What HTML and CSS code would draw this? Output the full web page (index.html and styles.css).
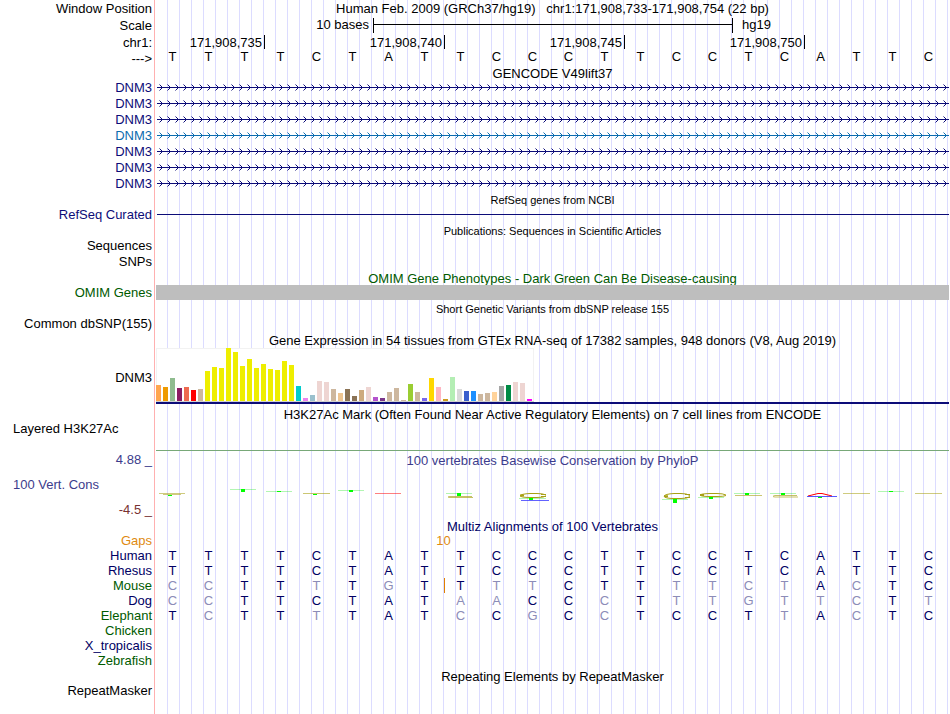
FILE: index.html
```
<!DOCTYPE html>
<html lang="en">

<head>
    <meta charset="utf-8">
    <title>chr1:171,908,733-171,908,754 hg19</title>
    <link rel="stylesheet" href="styles.css">
</head>

<body>
    <svg class="defs" aria-hidden="true">
        <defs>
            <pattern id="strand-navy" width="8" height="7" patternUnits="userSpaceOnUse">
                <path d="M0 3.5h8M2.5 .5l3 3l-3 3" fill="none" stroke="#0c0c78" />
            </pattern>
            <pattern id="strand-blue" width="8" height="7" patternUnits="userSpaceOnUse">
                <path d="M0 3.5h8M2.5 .5l3 3l-3 3" fill="none" stroke="#0b6cae" />
            </pattern>
        </defs>
    </svg>
    <main class="browser">
        <!-- ruler -->
        <div class="track tall">
            <div class="label">Window Position</div>
            <h1 class="position">Human Feb. 2009 (GRCh37/hg19) &nbsp; chr1:171,908,733-171,908,754 (22 bp)</h1>
        </div>
        <div class="track tall">
            <div class="label">Scale</div>
            <div class="columns scale">
                <span class="scale-size">10 bases</span>
                <span class="scale-bar"></span>
                <span class="scale-db">hg19</span>
            </div>
        </div>
        <div class="track">
            <div class="label">chr1:</div>
            <div class="columns ticks">
                <span>171,908,735</span>
                <span>171,908,740</span>
                <span>171,908,745</span>
                <span>171,908,750</span>
            </div>
        </div>
        <div class="track strand">
            <div class="label">---&gt;</div>
            <div class="columns bases"><b>T</b><b>T</b><b>T</b><b>T</b><b>C</b><b>T</b><b>A</b><b>T</b><b>T</b><b>C</b><b>C</b><b>C</b><b>T</b><b>T</b><b>C</b><b>C</b><b>T</b><b>C</b><b>A</b><b>T</b><b>T</b><b>C</b></div>
        </div>

        <h2>GENCODE V49lift37</h2>
        <div class="track navy">
            <div class="label">DNM3</div>
            <div class="lane"><svg class="arrows"><rect width="100%" height="7" fill="url(#strand-navy)" /></svg></div>
        </div>
        <div class="track navy">
            <div class="label">DNM3</div>
            <div class="lane"><svg class="arrows"><rect width="100%" height="7" fill="url(#strand-navy)" /></svg></div>
        </div>
        <div class="track navy">
            <div class="label">DNM3</div>
            <div class="lane"><svg class="arrows"><rect width="100%" height="7" fill="url(#strand-navy)" /></svg></div>
        </div>
        <div class="track blue">
            <div class="label">DNM3</div>
            <div class="lane"><svg class="arrows"><rect width="100%" height="7" fill="url(#strand-blue)" /></svg></div>
        </div>
        <div class="track navy">
            <div class="label">DNM3</div>
            <div class="lane"><svg class="arrows"><rect width="100%" height="7" fill="url(#strand-navy)" /></svg></div>
        </div>
        <div class="track navy">
            <div class="label">DNM3</div>
            <div class="lane"><svg class="arrows"><rect width="100%" height="7" fill="url(#strand-navy)" /></svg></div>
        </div>
        <div class="track navy">
            <div class="label">DNM3</div>
            <div class="lane"><svg class="arrows"><rect width="100%" height="7" fill="url(#strand-navy)" /></svg></div>
        </div>

        <h2 class="small">RefSeq genes from NCBI</h2>
        <div class="track navy">
            <div class="label">RefSeq Curated</div>
            <div class="lane"><div class="intron"></div></div>
        </div>

        <h2 class="small">Publications: Sequences in Scientific Articles</h2>
        <div class="track">
            <div class="label">Sequences</div>
        </div>
        <div class="track">
            <div class="label">SNPs</div>
        </div>

        <h2 class="green">OMIM Gene Phenotypes - Dark Green Can Be Disease-causing</h2>
        <div class="track green">
            <div class="label">OMIM Genes</div>
            <div class="omim"></div>
        </div>

        <h2 class="small">Short Genetic Variants from dbSNP release 155</h2>
        <div class="track">
            <div class="label">Common dbSNP(155)</div>
        </div>

        <h2>Gene Expression in 54 tissues from GTEx RNA-seq of 17382 samples, 948 donors (V8, Aug 2019)</h2>
        <div class="track gtex">
            <div class="label">DNM3</div>
            <div class="gtex-model">
                <svg class="gtex-bars" width="378" height="54" shape-rendering="crispEdges">
                    <rect width="378" height="54" fill="#f2f2f2" />
                    <rect x="1" y="1" width="376" height="53" fill="#fff" />
                    <rect y="53" width="378" height="1" fill="#d0d0d0" />
                    <rect x="0" y="37" width="5" height="16" fill="#ffa54f" />
                    <rect x="7" y="39" width="5" height="14" fill="#ee9a00" />
                    <rect x="14" y="30" width="5" height="23" fill="#8fbc8f" />
                    <rect x="21" y="40" width="5" height="13" fill="#8b1c62" />
                    <rect x="28" y="39" width="5" height="14" fill="#ee6a50" />
                    <rect x="35" y="42" width="5" height="11" fill="#ff0000" />
                    <rect x="42" y="41" width="5" height="12" fill="#cdb79e" />
                    <g fill="#eeee00">
                        <rect x="49" y="23" width="5" height="30" />
                        <rect x="56" y="19" width="5" height="34" />
                        <rect x="63" y="20" width="5" height="33" />
                        <rect x="70" y="0" width="5" height="53" />
                        <rect x="77" y="4" width="5" height="49" />
                        <rect x="84" y="18" width="5" height="35" />
                        <rect x="91" y="11" width="5" height="42" />
                        <rect x="98" y="20" width="5" height="33" />
                        <rect x="105" y="16" width="5" height="37" />
                        <rect x="112" y="21" width="5" height="32" />
                        <rect x="119" y="22" width="5" height="31" />
                        <rect x="126" y="13" width="5" height="40" />
                        <rect x="133" y="17" width="5" height="36" />
                    </g>
                    <rect x="140" y="38" width="5" height="15" fill="#00cdcd" />
                    <rect x="147" y="50" width="5" height="3" fill="#ee82ee" />
                    <rect x="154" y="47" width="5" height="6" fill="#9ac0cd" />
                    <rect x="161" y="33" width="5" height="20" fill="#eed5d2" />
                    <rect x="168" y="34" width="5" height="19" fill="#eed5d2" />
                    <rect x="175" y="41" width="5" height="12" fill="#cdb79e" />
                    <rect x="182" y="45" width="5" height="8" fill="#eec591" />
                    <rect x="189" y="41" width="5" height="12" fill="#8b7355" />
                    <rect x="196" y="48" width="5" height="5" fill="#8b7355" />
                    <rect x="203" y="42" width="5" height="11" fill="#cdaa7d" />
                    <rect x="210" y="39" width="5" height="14" fill="#eed5d2" />
                    <rect x="217" y="49" width="5" height="4" fill="#b452cd" />
                    <rect x="224" y="50" width="5" height="3" fill="#7a378b" />
                    <rect x="231" y="44" width="5" height="9" fill="#cdb79e" />
                    <rect x="238" y="40" width="5" height="13" fill="#cdb79e" />
                    <rect x="245" y="52" width="5" height="1" fill="#cdb79e" />
                    <rect x="252" y="36" width="5" height="17" fill="#9acd32" />
                    <rect x="259" y="44" width="5" height="9" fill="#cdb79e" />
                    <rect x="266" y="50" width="5" height="3" fill="#7a67ee" />
                    <rect x="273" y="30" width="5" height="23" fill="#ffd700" />
                    <rect x="280" y="39" width="5" height="14" fill="#ffb6c1" />
                    <rect x="287" y="51" width="5" height="2" fill="#cd9b1d" />
                    <rect x="294" y="29" width="5" height="24" fill="#b4eeb4" />
                    <rect x="301" y="41" width="5" height="12" fill="#d9d9d9" />
                    <rect x="308" y="43" width="5" height="10" fill="#3a5fcd" />
                    <rect x="315" y="43" width="5" height="10" fill="#1e90ff" />
                    <rect x="322" y="46" width="5" height="7" fill="#cdb79e" />
                    <rect x="329" y="45" width="5" height="8" fill="#cdb79e" />
                    <rect x="336" y="44" width="5" height="9" fill="#ffd39b" />
                    <rect x="343" y="38" width="5" height="15" fill="#a6a6a6" />
                    <rect x="350" y="37" width="5" height="16" fill="#008b45" />
                    <rect x="357" y="34" width="5" height="19" fill="#eed5d2" />
                    <rect x="364" y="35" width="5" height="18" fill="#eed5d2" />
                    <rect x="371" y="51" width="5" height="2" fill="#ff00ff" />
                </svg>
            </div>
        </div>

        <h2>H3K27Ac Mark (Often Found Near Active Regulatory Elements) on 7 cell lines from ENCODE</h2>
        <div class="track h3k27ac">
            <div class="label left">Layered H3K27Ac</div>
            <div class="signal"></div>
        </div>

        <!-- conservation -->
        <div class="track phylop">
            <div class="axis">
                <span class="max">4.88 _</span>
                <span class="left">100 Vert. Cons</span>
                <span class="min">-4.5 _</span>
            </div>
            <div class="wiggle">
                <h3>100 vertebrates Basewise Conservation by PhyloP</h3>
                <svg class="logo" width="793" height="20" viewBox="156 486 793 20">
                    <path d="M230 489.500h26M266 491.500h26M338 490.500h26M446 493.500h26M519 498.500h27M662 499.500h26M698 497.500h26M734 493.500h26M770 493.500h26M878 491.500h26" stroke="#00e000" stroke-opacity=".3" />
                    <g fill="none" stroke="#a8a014">
                        <path d="M159 493.500h26M163 494.500h18" stroke-opacity=".55" />
                        <path d="M303 493.500h27" stroke-opacity=".6" />
                        <path d="M472 496.500h-22q-4 .500 0 1h23" stroke-opacity=".65" />
                        <path d="M735 495.500h27" stroke-opacity=".6" />
                        <path d="M797 495.500h-22q-4 1 0 1.500h23" stroke-opacity=".65" />
                        <path d="M843 493.500h27M915 493.500h27" stroke-opacity=".55" />
                        <path d="M546 495q-3-1.500-9-1.500h-7q-9 .500-10 2.200q1 1.800 10 1.800h7q7 0 9-1.500" />
                        <path d="M690 495.500q-3-2-9-2h-7q-9 .500-10 2.700q1 2.300 10 2.300h7q7 0 9-2" />
                        <path d="M726 495q-3-1.500-9-1.500h-7q-9 .300-10 1.500q1 1.500 10 1.500h7q7 0 9-1" />
                        <path d="M520 495.500h4M664 496.200h4M700 495h4" stroke-width="2" />
                        <path d="M541 494.500h5M541 496.500h5M685 494.500h5M685 497.500h5" />
                    </g>
                    <path d="M375 493.500h26" stroke="#ff0000" stroke-opacity=".5" />
                    <path d="M521 500.500h28" stroke="#2020ff" stroke-opacity=".7" />
                    <path d="M808 496l10-2.500h4l10 2.500" fill="none" stroke="#ff0000" />
                    <path d="M807 496.500h30" stroke="#2020ff" stroke-opacity=".75" />
                    <g fill="#00ff00" shape-rendering="crispEdges">
                        <rect x="168" y="495" width="4" height="1" />
                        <rect x="241" y="489" width="4" height="3" />
                        <rect x="277" y="491" width="4" height="1" />
                        <rect x="313" y="494" width="4" height="1" />
                        <rect x="349" y="490" width="4" height="2" />
                        <rect x="457" y="493" width="4" height="3" />
                        <rect x="529" y="498" width="4" height="2" />
                        <rect x="673" y="499" width="4" height="4" />
                        <rect x="709" y="497" width="4" height="2" />
                        <rect x="745" y="493" width="4" height="2" />
                        <rect x="781" y="493" width="4" height="2" />
                        <rect x="818" y="497" width="4" height="1" />
                        <rect x="889" y="491" width="4" height="1" />
                    </g>
                </svg>
            </div>
        </div>

        <h2 class="dark">Multiz Alignments of 100 Vertebrates</h2>
        <div class="track species gaps">
            <div class="label">Gaps</div>
            <div class="columns"><span class="gap-size">10</span></div>
        </div>
        <div class="track species dark">
            <div class="label">Human</div>
            <div class="columns bases"><b>T</b><b>T</b><b>T</b><b>T</b><b>C</b><b>T</b><b>A</b><b>T</b><b>T</b><b>C</b><b>C</b><b>C</b><b>T</b><b>T</b><b>C</b><b>C</b><b>T</b><b>C</b><b>A</b><b>T</b><b>T</b><b>C</b></div>
        </div>
        <div class="track species dark">
            <div class="label">Rhesus</div>
            <div class="columns bases"><b>T</b><b>T</b><b>T</b><b>T</b><b>C</b><b>T</b><b>A</b><b>T</b><b>T</b><b>C</b><b>C</b><b>C</b><b>T</b><b>T</b><b>C</b><b>C</b><b>T</b><b>C</b><b>A</b><b>T</b><b>T</b><b>C</b></div>
        </div>
        <div class="track species green">
            <div class="label">Mouse</div>
            <div class="columns bases"><i>C</i><i>C</i><b>T</b><b>T</b><i>T</i><b>T</b><i>G</i><b>T</b><b class="insert">T</b><i>T</i><i>T</i><b>C</b><b>T</b><b>T</b><i>T</i><i>T</i><i>C</i><i>T</i><b>A</b><i>C</i><b>T</b><b>C</b></div>
        </div>
        <div class="track species dark">
            <div class="label">Dog</div>
            <div class="columns bases"><i>C</i><i>C</i><b>T</b><b>T</b><b>C</b><b>T</b><b>A</b><b>T</b><i>A</i><i>A</i><b>C</b><b>C</b><i>C</i><b>T</b><i>T</i><i>T</i><i>G</i><i>T</i><i>T</i><i>C</i><b>T</b><i>T</i></div>
        </div>
        <div class="track species green">
            <div class="label">Elephant</div>
            <div class="columns bases"><b>T</b><i>C</i><b>T</b><b>T</b><i>T</i><b>T</b><b>A</b><b>T</b><i>C</i><b>C</b><i>G</i><b>C</b><i>C</i><b>T</b><b>C</b><b>C</b><b>T</b><i>T</i><b>A</b><i>C</i><b>T</b><b>C</b></div>
        </div>
        <div class="track species green">
            <div class="label">Chicken</div>
        </div>
        <div class="track species dark">
            <div class="label">X_tropicalis</div>
        </div>
        <div class="track species green">
            <div class="label">Zebrafish</div>
        </div>

        <h2>Repeating Elements by RepeatMasker</h2>
        <div class="track">
            <div class="label">RepeatMasker</div>
        </div>
    </main>
</body>

</html>
```
FILE: styles.css
```
body {
    margin: 0;
    background-color: #fff;
    color: #000;
    font-family: "Liberation Sans", Arial, sans-serif;
    font-size: 13px;
    line-height: 15px;
}

.defs {
    display: block;
    width: 0;
    height: 0;
}

/* red divider after the labels, then a guide line every 12px */
.browser {
    box-sizing: border-box;
    min-height: 100vh;
    margin-right: 1px;
    padding-top: 1px;
    background-image:
        linear-gradient(to right, #fff 154px, #ffb0b0 154px, #ffb0b0 155px, #fff 155px, #fff 156px, transparent 156px),
        repeating-linear-gradient(to right, transparent 0, transparent 11px, #dcdcff 11px, #dcdcff 12px);
}

.track {
    display: grid;
    grid-template-columns: 152px 1fr;
    column-gap: 4px;
    min-height: 16px;
}

.tall {
    min-height: 17px;
}

.label {
    text-align: right;
}

.left {
    padding-left: 13px;
    text-align: left;
}

h1,
h2,
h3 {
    margin: 0;
    font-size: 13px;
    font-weight: normal;
    text-align: center;
}

h2 {
    height: 15px;
    margin-left: 156px;
    line-height: 17px;
}

h2.small {
    font-size: 11px;
}

.navy {
    color: #0c0c78;
}

.dark {
    color: #000064;
}

.blue {
    color: #0b6cae;
}

.green {
    color: #005a00;
}

/* one column per base */
.columns {
    display: grid;
    grid-template-columns: repeat(22, 1fr);
    padding-left: 1px;
}

.scale {
    line-height: 13px;
}

.scale-size {
    grid-column: 1 / 7;
    padding-right: 4px;
    text-align: right;
}

.scale-bar {
    grid-column: 7 / 17;
    height: 15px;
    border: solid #000;
    border-width: 0 1px;
    box-sizing: border-box;
    background: linear-gradient(#000, #000) 0 6px / 100% 1px no-repeat;
}

.scale-db {
    grid-column: 17 / 23;
    padding-left: 9px;
}

.ticks span {
    grid-column: span 5;
    height: 14px;
    padding-right: 2px;
    border-right: 1px solid #000;
    text-align: right;
}

.ticks span:first-child {
    grid-column: span 3;
}

.strand {
    height: 14px;
    min-height: 0;
}

.strand .bases {
    line-height: 11px;
}

.bases b,
.bases i {
    padding-right: 5px;
    font-style: normal;
    font-weight: normal;
    text-align: center;
}

.species {
    min-height: 15px;
}

.species b {
    color: #000064;
}

.species i {
    color: #8c8cb8;
}

.species .insert {
    margin-left: -1px;
    border-left: 1px solid #e08000;
}

.gaps {
    color: #e08a10;
}

.gap-size {
    grid-column: 8 / 10;
    padding-right: 3px;
    text-align: center;
}

.lane {
    display: flex;
    align-items: center;
    height: 15px;
    padding-left: 1px;
}

.arrows {
    display: block;
    width: 100%;
    height: 7px;
}

.intron {
    width: 100%;
    height: 1px;
    background-color: #0c0c78;
}

.omim {
    height: 15px;
    background-color: #bebebe;
}

.gtex {
    align-items: center;
    padding: 1px 0 2px;
}

.gtex .label {
    padding-top: 2px;
}

.gtex-bars {
    display: block;
}

.gtex-model {
    border-bottom: 2px solid #0c0c78;
}

.h3k27ac {
    min-height: 30px;
}

.signal {
    border-bottom: 1px solid #78a878;
}

.phylop {
    padding: 1px 0;
}

.axis {
    display: flex;
    flex-direction: column;
    justify-content: space-between;
    min-height: 65px;
    color: #3c3c8c;
    text-align: right;
}

.axis .left {
    text-align: left;
}

.axis .min {
    color: #783232;
}

.wiggle h3 {
    margin-bottom: 17px;
    color: #3c3c8c;
    line-height: 17px;
}

.logo {
    display: block;
}
```
